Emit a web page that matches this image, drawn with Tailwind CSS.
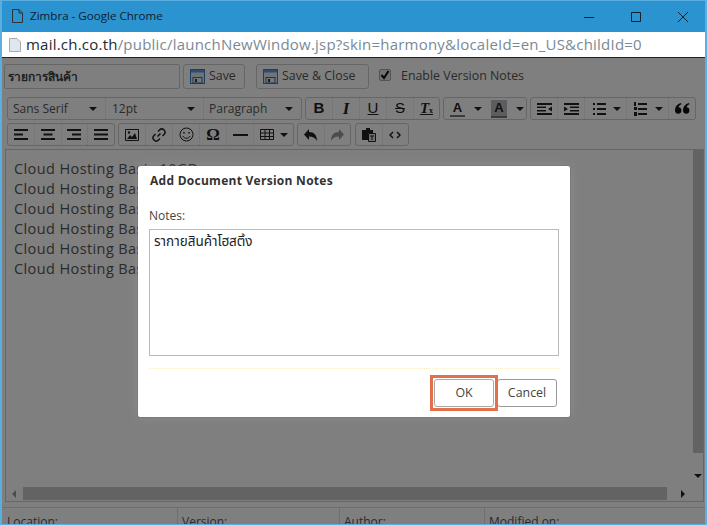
<!DOCTYPE html>
<html lang="en">
<head>
  <meta charset="UTF-8" />
  <title>Zimbra - Google Chrome</title>
  <script src="https://cdn.jsdelivr.net/npm/@tailwindcss/browser@4"></script>
</head>
<body class="w-[707px] h-[525px] overflow-hidden bg-white font-['Open_Sans','Noto_Sans',sans-serif]">
  <div class="w-[707px] h-[525px] flex flex-col overflow-hidden border-x-2 border-b border-[#5aaee0] border-t-0">
    <!-- Title bar -->
    <header class="-mx-[2px] h-[32px] shrink-0 bg-[#2b93cf] flex items-center border-t border-[#5aaee0] text-[#10202c]">
      <svg class="ml-[12px] w-[11px] h-[14px] mb-[1px]" viewBox="0 0 11 14" fill="none" stroke="#333" stroke-width="1"><path d="M.5.5h6.500l3.500 3.500v9.500h-10zM7 .5v3.500h3.500"/></svg>
      <span class="ml-[7px] text-[11.600px] mb-[1px]">Zimbra - Google Chrome</span>
      <div class="ml-auto flex items-center mr-[2px]">
        <svg class="w-[46px] h-[30px]" viewBox="0 0 46 30" stroke="#10202c" fill="none"><path d="M17 15.500h10"/></svg>
        <svg class="w-[46px] h-[30px]" viewBox="0 0 46 30" stroke="#10202c" fill="none"><path d="M18.500 10.500h9v9h-9z"/></svg>
        <svg class="w-[46px] h-[30px]" viewBox="0 0 46 30" stroke="#10202c" fill="none"><path d="M19 10l10 10M29 10l-10 10"/></svg>
      </div>
    </header>
    <!-- Address bar -->
    <div class="h-[26px] shrink-0 bg-white flex items-center border-b border-[#222] text-[15px] tracking-[0.22px]">
      <svg class="ml-[7px] w-[12px] h-[14px]" viewBox="0 0 12 14" fill="#dce8ee" stroke="#aaa"><path d="M.5.5h7.500l3.500 3.500v9.500h-11z"/></svg>
      <span class="ml-[5px] text-[#1d2a33]">mail.ch.co.th</span><span class="text-[#7a8a95]">/public/launchNewWindow.jsp?skin=harmony&amp;localeId=en_US&amp;childId=0</span>
    </div>

    <!-- Page + modal overlay -->
    <main class="relative flex-1 min-h-0 flex flex-col text-[#555]">
      <!-- Name / save row -->
      <div class="h-[25px] mt-[6px] ml-[2px] flex items-center text-[12.400px] shrink-0">
        <div class="w-[176px] h-[25px] border border-[#ccc] rounded-[2px] flex items-center pl-[3px] font-semibold text-[12px] text-[#444]">รายการสินค้า</div>
        <button class="ml-[3px] w-[62px] h-[25px] border border-[#ccc] rounded-[3px] flex items-center pl-[6px] gap-[4px]">
          <svg class="w-[15px] h-[15px]" viewBox="0 0 15 15"><rect x=".5" y=".5" width="14" height="14" fill="#dfe8f0" stroke="#3b7fc9"/><rect x="1" y="1" width="13" height="2.500" fill="#5a9ad8"/><rect x="3" y="8.500" width="9" height="5.500" fill="#eee" stroke="#3b6f9f"/><rect x="5" y="10" width="2" height="3" fill="#335"/></svg>Save
        </button>
        <button class="ml-[11px] w-[113px] h-[25px] border border-[#ccc] rounded-[3px] flex items-center pl-[6px] gap-[4px]">
          <svg class="w-[15px] h-[15px]" viewBox="0 0 15 15"><rect x=".5" y=".5" width="14" height="14" fill="#dfe8f0" stroke="#3b7fc9"/><rect x="1" y="1" width="13" height="2.500" fill="#5a9ad8"/><rect x="3" y="8.500" width="9" height="5.500" fill="#eee" stroke="#3b6f9f"/><rect x="5" y="10" width="2" height="3" fill="#335"/></svg>Save &amp; Close
        </button>
        <span class="ml-[10px] w-[12px] h-[12px] border border-[#aaa] bg-[#e4e4e4] rounded-[2px] flex items-center justify-center -mt-[3px]">
          <svg class="w-[10px] h-[10px]" viewBox="0 0 10 10" fill="none" stroke="#111" stroke-width="2"><path d="M1.500 5l2.500 3 4.500-7"/></svg>
        </span>
        <span class="ml-[10px]">Enable Version Notes</span>
      </div>

      <!-- Toolbar row 1 -->
      <div class="h-[23px] mt-[8px] ml-[5px] flex gap-[3px] text-[12px] shrink-0">
        <div class="flex w-[295px] border border-[#ccc] rounded-[3px]">
          <div class="w-[98px] flex items-center justify-between pl-[5px] pr-[8px] border-r border-dotted border-[#ddd]">Sans Serif<i class="border-x-[4px] border-t-[4px] border-x-transparent border-t-[#222]"></i></div>
          <div class="w-[98px] flex items-center justify-between pl-[6px] pr-[8px] border-r border-dotted border-[#ddd]">12pt<i class="border-x-[4px] border-t-[4px] border-x-transparent border-t-[#222]"></i></div>
          <div class="flex-1 flex items-center justify-between pl-[5px] pr-[8px]">Paragraph<i class="border-x-[4px] border-t-[4px] border-x-transparent border-t-[#222]"></i></div>
        </div>
        <div class="flex w-[135px] border border-[#ccc] rounded-[3px] text-[#222] text-[15px] divide-x divide-dotted divide-[#ddd]">
          <span class="w-[27px] flex items-center justify-center font-['Liberation_Sans'] font-bold">B</span>
          <span class="w-[27px] flex items-center justify-center font-['Liberation_Serif'] font-bold italic text-[17px]">I</span>
          <span class="w-[27px] flex items-center justify-center font-['Liberation_Sans'] underline">U</span>
          <span class="w-[27px] flex items-center justify-center font-['Liberation_Sans'] line-through">S</span>
          <span class="flex-1 flex items-center justify-center font-['Liberation_Serif'] font-bold italic underline">T<sub class="text-[8px] not-italic">x</sub></span>
        </div>
        <div class="flex w-[84px] border border-[#ccc] rounded-[3px] items-center text-[#222] font-['Liberation_Sans'] font-bold text-[13px]">
          <span class="ml-[6px] w-[15px] text-center border-b-2 border-[#777] leading-[15px]">A</span>
          <i class="ml-[9px] border-x-[4px] border-t-[4px] border-x-transparent border-t-[#222]"></i>
          <span class="ml-[9px] w-[16px] text-center bg-[#bbb] border-b-2 border-[#777] leading-[16px]">A</span>
          <i class="ml-[9px] border-x-[4px] border-t-[4px] border-x-transparent border-t-[#222]"></i>
        </div>
        <div class="flex w-[166px] border border-[#ccc] rounded-[3px] text-[#222] divide-x divide-dotted divide-[#ddd]">
          <span class="w-[27px] flex items-center justify-center"><svg class="w-[15px] h-[12px]" viewBox="0 0 15 12" fill="#222"><path d="M0 0h15v2H0zM0 3.500h9v1.500H0zM0 7h9v1.500H0zM0 10h15v2H0zM15 3.500v5l-4-2.500z"/></svg></span>
          <span class="w-[27px] flex items-center justify-center"><svg class="w-[15px] h-[12px]" viewBox="0 0 15 12" fill="#222"><path d="M0 0h15v2H0zM6 3.500h9v1.500H6zM6 7h9v1.500H6zM0 10h15v2H0zM0 3.500v5l4-2.500z"/></svg></span>
          <span class="w-[42px] flex items-center pl-[8px] gap-[7px]"><svg class="w-[13px] h-[12px]" viewBox="0 0 13 12" fill="#222"><path d="M0 0h2v2H0zM4 0h9v2H4zM0 5h2v2H0zM4 5h9v2H4zM0 10h2v2H0zM4 10h9v2H4z"/></svg><i class="border-x-[4px] border-t-[4px] border-x-transparent border-t-[#222]"></i></span>
          <span class="w-[42px] flex items-center pl-[7px] gap-[8px]"><svg class="w-[13px] h-[14px]" viewBox="0 0 13 14" fill="#222"><path d="M0 0h2v4H0zM4 1h9v2H4zM0 5h3v3H0zM4 6h9v2H4zM0 10h3v4H0zM4 11h9v2H4z"/></svg><i class="border-x-[4px] border-t-[4px] border-x-transparent border-t-[#222]"></i></span>
          <span class="flex-1 flex items-center justify-center"><svg class="w-[15px] h-[11px]" viewBox="0 0 15 11" fill="#111"><path d="M6 0C2 1 0 4 0 7.500A3.200 3.200 0 1 0 3.500 4.300C3.800 3 5 2 6.500 1.300zM14 0c-4 1-6 4-6 7.500a3.200 3.200 0 1 0 3.500-3.200c.3-1.300 1.500-2.300 3-3z"/></svg></span>
        </div>
      </div>

      <!-- Toolbar row 2 -->
      <div class="h-[23px] mt-[3px] ml-[5px] flex shrink-0 text-[#222]">
        <div class="flex w-[108px] border border-[#ccc] rounded-[3px] divide-x divide-dotted divide-[#ddd]">
          <span class="flex-1 flex items-center justify-center"><svg class="w-[14px] h-[11px]" viewBox="0 0 14 11" fill="#222"><path d="M0 0h14v2H0zM0 4.500h9v2H0zM0 9h14v2H0z"/></svg></span>
          <span class="flex-1 flex items-center justify-center"><svg class="w-[14px] h-[11px]" viewBox="0 0 14 11" fill="#222"><path d="M0 0h14v2H0zM2.500 4.500h9v2h-9zM0 9h14v2H0z"/></svg></span>
          <span class="flex-1 flex items-center justify-center"><svg class="w-[14px] h-[11px]" viewBox="0 0 14 11" fill="#222"><path d="M0 0h14v2H0zM5 4.500h9v2H5zM0 9h14v2H0z"/></svg></span>
          <span class="flex-1 flex items-center justify-center"><svg class="w-[14px] h-[11px]" viewBox="0 0 14 11" fill="#222"><path d="M0 0h14v2H0zM0 4.500h14v2H0zM0 9h14v2H0z"/></svg></span>
        </div>
        <div class="ml-[3px] flex w-[176px] border border-[#ccc] rounded-[3px] divide-x divide-dotted divide-[#ddd]">
          <span class="w-[27px] flex items-center justify-center"><svg class="w-[14px] h-[12px]" viewBox="0 0 14 12"><path d="M.5.500h13v11H.5z" fill="none" stroke="#222"/><path d="M2 10l3-4 2 2 3-4 2 6z" fill="#222"/><circle cx="4" cy="3.500" r="1.200" fill="#222"/></svg></span>
          <span class="w-[27px] flex items-center justify-center"><svg class="w-[14px] h-[14px]" viewBox="0 0 14 14" fill="none" stroke="#222" stroke-width="1.500"><path d="M5.500 8.500l3-3M6 3.500l1.500-1.500a2.500 2.500 0 0 1 4.500 4.500L10.500 8M3.500 6L2 7.500a2.500 2.500 0 0 0 4.500 4.500L8 10.500"/></svg></span>
          <span class="w-[27px] flex items-center justify-center"><svg class="w-[15px] h-[15px]" viewBox="0 0 15 15" fill="none" stroke="#222"><circle cx="7.500" cy="7.500" r="6.500"/><path d="M4 9c1 3 6 3 7 0"/><path d="M5 5v1.500M10 5v1.500" stroke-width="1.500"/></svg></span>
          <span class="w-[27px] flex items-center justify-center font-['Liberation_Serif'] font-bold text-[17px]">Ω</span>
          <span class="w-[27px] flex items-center justify-center"><svg class="w-[15px] h-[2px]" viewBox="0 0 15 2" fill="#222"><path d="M0 0h15v2H0z"/></svg></span>
          <span class="flex-1 flex items-center pl-[6px] gap-[6px]"><svg class="w-[14px] h-[11px]" viewBox="0 0 14 11" fill="none" stroke="#222"><path d="M.5.500h13v10H.5zM.5 4h13M.5 7.500h13M5 .500v10M9.500.500v10"/></svg><i class="border-x-[4px] border-t-[4px] border-x-transparent border-t-[#222]"></i></span>
        </div>
        <div class="ml-[3px] flex w-[54px] border border-[#ccc] rounded-[3px] divide-x divide-dotted divide-[#ddd]">
          <span class="flex-1 flex items-center justify-center"><svg class="w-[13px] h-[12px]" viewBox="0 0 13 12" fill="#222"><path d="M5 0v3c5 0 8 3 8 9-1.500-3-4-4.500-8-4.500V11L0 5.500z"/></svg></span>
          <span class="flex-1 flex items-center justify-center"><svg class="w-[13px] h-[12px]" viewBox="0 0 13 12" fill="#999"><path d="M8 0v3c-5 0-8 3-8 9 1.500-3 4-4.500 8-4.500V11l5-5.500z"/></svg></span>
        </div>
        <div class="ml-[4px] flex w-[54px] border border-[#ccc] rounded-[3px] divide-x divide-dotted divide-[#ddd]">
          <span class="flex-1 flex items-center justify-center"><svg class="w-[14px] h-[14px]" viewBox="0 0 14 14"><path d="M4 0h4v2h3v3H6v7H0V2h4z" fill="#222"/><path d="M6.500 5.500h7v8h-7z" fill="#ddd" stroke="#222"/><path d="M8 7.500h4v1h-1.500v3.500h-1V8.500H8z" fill="#222"/></svg></span>
          <span class="flex-1 flex items-center justify-center"><svg class="w-[12px] h-[8px]" viewBox="0 0 12 8" fill="none" stroke="#222" stroke-width="1.500"><path d="M4 1L1 4l3 3M8 1l3 3-3 3"/></svg></span>
        </div>
      </div>

      <!-- Editor -->
      <div class="relative flex-1 min-h-0 mt-[3px] ml-[3px] mr-[1px] border border-[#ccc] flex flex-col overflow-hidden">
        <div class="flex-1 min-h-0 pl-[8px] pt-[9px] text-[14.500px] leading-[20px] tracking-[0.4px] text-[#555]">
          <p>Cloud Hosting Basic 10GB</p>
          <p>Cloud Hosting Basic 20GB</p>
          <p>Cloud Hosting Basic 30GB</p>
          <p>Cloud Hosting Basic 40GB</p>
          <p>Cloud Hosting Basic 50GB</p>
          <p>Cloud Hosting Basic 60GB</p>
        </div>
        <!-- scrollbars -->
        <div class="absolute right-0 top-0 bottom-[15px] w-[10px] flex flex-col items-center">
          <div class="w-[10px] h-[303px] bg-[#c6c6c6]"></div>
          <i class="mt-auto mb-[8px] border-x-[4px] border-t-[4px] border-x-transparent border-t-[#222]"></i>
        </div>
        <div class="h-[13px] mb-[1px] shrink-0 flex items-center">
          <i class="ml-[6px] border-y-[4px] border-r-[4px] border-y-transparent border-r-[#999]"></i>
          <div class="ml-[7px] w-[644px] h-[13px] bg-[#c6c6c6]"></div>
          <i class="ml-[14px] border-y-[4px] border-l-[4px] border-y-transparent border-l-[#222]"></i>
        </div>
      </div>

      <!-- Properties row -->
      <div class="h-[17px] mt-[5px] flex border-t border-[#ddd] text-[12px] leading-[28px] shrink-0 overflow-hidden">
        <div class="w-[176px] pl-[5px] border-r border-[#ddd]">Location:</div>
        <div class="w-[162px] pl-[4px] border-r border-[#ddd]">Version:</div>
        <div class="w-[145px] pl-[4px] border-r border-[#ddd]">Author:</div>
        <div class="pl-[4px]">Modified on:</div>
      </div>

      <!-- Modal -->
      <div class="absolute inset-0 bg-black/50"></div>
      <div class="absolute left-[136px] top-[108px] w-[432px] h-[251px] bg-white rounded-[2px] shadow-[0_0_0_1px_rgba(0,0,0,0.08),0_0_12px_rgba(255,255,255,0.12)] px-[11px] flex flex-col text-[12px] text-[#444]">
        <h2 class="mt-[6px] ml-[1px] font-bold text-[#333] leading-[17px] tracking-[0.27px]">Add Document Version Notes</h2>
        <label class="mt-[18px] leading-[17px]">Notes:</label>
        <div class="mt-[5px] w-[410px] h-[127px] border border-[#bbb] px-[4px] py-[4px] text-[#222] text-[13.500px] leading-[16px] font-['Noto_Sans_Thai','Noto_Sans',sans-serif]">รากายสินค้าโฮสติ้ง</div>
        <div class="mt-[12px] w-[410px] border-t border-dotted border-[#f8f0d0]"></div>
        <div class="mt-[10px] w-[410px] flex justify-end pr-[2px] text-[12.400px]">
          <div class="relative w-[60px] h-[28px]">
            <button class="w-full h-full border border-[#aaa] rounded-[3px]">OK</button>
            <span class="absolute -inset-[4px] border-[3px] border-[#e2704a]"></span>
          </div>
          <button class="ml-[3px] w-[60px] h-[28px] border border-[#999] rounded-[3px]">Cancel</button>
        </div>
      </div>
    </main>
  </div>
</body>
</html>
